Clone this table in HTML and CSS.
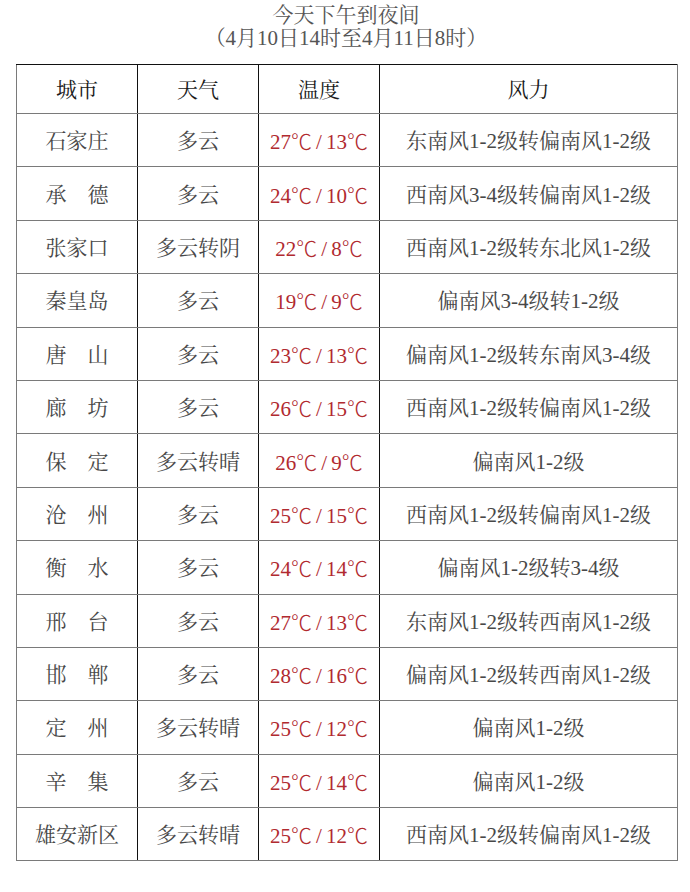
FILE: index.html
```html
<!DOCTYPE html>
<html lang="zh-CN">
<head>
<meta charset="utf-8">
<title>今天下午到夜间</title>
<link rel="stylesheet" href="styles.css">
</head>
<body>
<div class="page">
  <header class="title">
    <div class="title-line">今天下午到夜间</div>
    <div class="title-line">（4月10日14时至4月11日8时）</div>
  </header>
  <table class="forecast">
    <colgroup>
      <col class="c-city"><col class="c-weather"><col class="c-temp"><col class="c-wind">
    </colgroup>
    <thead>
      <tr class="head-row"><th>城市</th><th>天气</th><th>温度</th><th>风力</th></tr>
    </thead>
    <tbody>
      <tr><td>石家庄</td><td>多云</td><td class="temp">27<span class="deg">℃</span><span class="sl">/</span>13<span class="deg">℃</span></td><td>东南风1-2级转偏南风1-2级</td></tr>
      <tr><td>承　德</td><td>多云</td><td class="temp">24<span class="deg">℃</span><span class="sl">/</span>10<span class="deg">℃</span></td><td>西南风3-4级转偏南风1-2级</td></tr>
      <tr><td>张家口</td><td>多云转阴</td><td class="temp">22<span class="deg">℃</span><span class="sl">/</span>8<span class="deg">℃</span></td><td>西南风1-2级转东北风1-2级</td></tr>
      <tr><td>秦皇岛</td><td>多云</td><td class="temp">19<span class="deg">℃</span><span class="sl">/</span>9<span class="deg">℃</span></td><td>偏南风3-4级转1-2级</td></tr>
      <tr><td>唐　山</td><td>多云</td><td class="temp">23<span class="deg">℃</span><span class="sl">/</span>13<span class="deg">℃</span></td><td>偏南风1-2级转东南风3-4级</td></tr>
      <tr><td>廊　坊</td><td>多云</td><td class="temp">26<span class="deg">℃</span><span class="sl">/</span>15<span class="deg">℃</span></td><td>西南风1-2级转偏南风1-2级</td></tr>
      <tr><td>保　定</td><td>多云转晴</td><td class="temp">26<span class="deg">℃</span><span class="sl">/</span>9<span class="deg">℃</span></td><td>偏南风1-2级</td></tr>
      <tr><td>沧　州</td><td>多云</td><td class="temp">25<span class="deg">℃</span><span class="sl">/</span>15<span class="deg">℃</span></td><td>西南风1-2级转偏南风1-2级</td></tr>
      <tr><td>衡　水</td><td>多云</td><td class="temp">24<span class="deg">℃</span><span class="sl">/</span>14<span class="deg">℃</span></td><td>偏南风1-2级转3-4级</td></tr>
      <tr><td>邢　台</td><td>多云</td><td class="temp">27<span class="deg">℃</span><span class="sl">/</span>13<span class="deg">℃</span></td><td>东南风1-2级转西南风1-2级</td></tr>
      <tr><td>邯　郸</td><td>多云</td><td class="temp">28<span class="deg">℃</span><span class="sl">/</span>16<span class="deg">℃</span></td><td>偏南风1-2级转西南风1-2级</td></tr>
      <tr><td>定　州</td><td>多云转晴</td><td class="temp">25<span class="deg">℃</span><span class="sl">/</span>12<span class="deg">℃</span></td><td>偏南风1-2级</td></tr>
      <tr><td>辛　集</td><td>多云</td><td class="temp">25<span class="deg">℃</span><span class="sl">/</span>14<span class="deg">℃</span></td><td>偏南风1-2级</td></tr>
      <tr class="dark-top"><td>雄安新区</td><td>多云转晴</td><td class="temp">25<span class="deg">℃</span><span class="sl">/</span>12<span class="deg">℃</span></td><td>西南风1-2级转偏南风1-2级</td></tr>
    </tbody>
  </table>
</div>
</body>
</html>
```

FILE: styles.css
```css
html, body {
  margin: 0;
  padding: 0;
  background: #ffffff;
}

body {
  font-family: "Liberation Serif", "Noto Serif CJK SC", "Noto Sans CJK SC", serif;
  color: #484848;
}

.page {
  width: 690px;
  padding: 4px 0 0 16px;
  box-sizing: border-box;
}

.title {
  width: 660px;
  text-align: center;
  font-size: 21px;
  line-height: 23px;
  color: #555555;
  margin-bottom: 14px;
}

.forecast {
  width: 661px;
  border-collapse: collapse;
  table-layout: fixed;
  font-size: 21px;
}

.c-city, .c-weather, .c-temp { width: 121px; }
.c-wind { width: 298px; }

.forecast th,
.forecast td {
  text-align: center;
  vertical-align: middle;
  padding: 2px 0 0 0;
  line-height: 24px;
  border-top: 1px solid #7a7a7a;
  border-bottom: 1px solid #7a7a7a;
  border-left: 1.5px solid #111111;
  border-right: 1.5px solid #111111;
  white-space: nowrap;
}

.forecast th:first-child,
.forecast td:first-child {
  border-left: 1px solid #7a7a7a;
}

.forecast th:last-child,
.forecast td:last-child {
  border-right: 1px solid #7a7a7a;
}

.head-row th {
  height: 46px;
  font-weight: normal;
  color: #1a1a1a;
  border-top: 1.5px solid #111111;
}

.forecast tbody tr {
  height: 53.4px;
}

.forecast .dark-top td {
  border-top: 1.5px solid #111111;
}

.temp {
  color: #b12a30;
}

.deg {
  font-family: "Noto Sans CJK SC", sans-serif;
  font-weight: 300;
}

.sl {
  margin: 0 4px;
}
```
